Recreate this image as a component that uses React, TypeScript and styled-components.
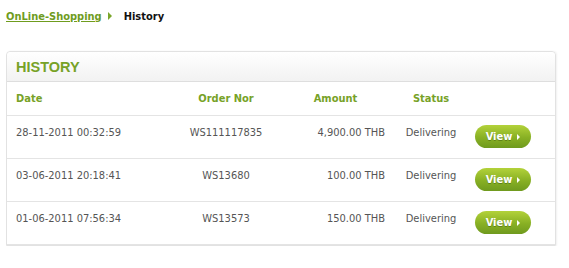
import React from "react";
import styled, { createGlobalStyle } from "styled-components";

const Global = createGlobalStyle`
  html, body { margin: 0; padding: 0; background: #fff; }
  body { font-family: Tahoma, "DejaVu Sans Condensed", "Liberation Sans", sans-serif; font-size: 11px; color: #555; }
`;

const Page = styled.div`
  padding: 8px 13px 0 6px;
  width: 550px;
`;

const Crumbs = styled.div`
  display: flex;
  align-items: center;
  height: 16px;
  font-weight: bold;
  font-size: 11px;
`;

const CrumbLink = styled.a`
  color: #6f9c1e;
  text-decoration: underline;
`;

const Arrow = styled.span`
  width: 0;
  height: 0;
  border-top: 4px solid transparent;
  border-bottom: 4px solid transparent;
  border-left: 4px solid #7aa62a;
  margin: 0 12px 0 6px;
`;

const Current = styled.span`
  color: #111;
`;

const Panel = styled.div`
  margin-top: 27px;
  border: 1px solid #e2e2e2;
  border-radius: 4px 4px 0 0;
  box-shadow: 1px 0 2px rgba(0, 0, 0, 0.06);
`;

const PanelHead = styled.div`
  height: 29px;
  display: flex;
  align-items: center;
  padding-left: 9px;
  background: linear-gradient(#ffffff, #f2f2f2);
  border-bottom: 1px solid #dedede;
  border-radius: 4px 4px 0 0;
  color: #77a227;
  font-weight: bold;
  font-size: 14.5px;
  font-family: "Liberation Sans", Arial, sans-serif;
`;

const Table = styled.table`
  width: 100%;
  border-collapse: collapse;
  table-layout: fixed;
`;

const Th = styled.th<{ $align?: string }>`
  height: 33px;
  text-align: ${(p) => p.$align || "left"};
  color: #77a227;
  font-weight: bold;
  font-size: 11px;
  padding: 0;
  border-bottom: 1px solid #e4e4e4;
`;

const Td = styled.td<{ $align?: string }>`
  height: 32px;
  text-align: ${(p) => p.$align || "left"};
  vertical-align: top;
  padding: 10px 0 0;
  border-bottom: 1px solid #e4e4e4;
  color: #555;
  white-space: nowrap;
`;

const ViewButton = styled.button`
  display: inline-flex;
  align-items: center;
  gap: 5px;
  height: 23px;
  width: 56px;
  justify-content: center;
  border: none;
  border-radius: 12px;
  background: linear-gradient(#b3d23a, #88b024 55%, #6f9a1e);
  color: #fff;
  font-weight: bold;
  font-size: 11px;
  font-family: inherit;
  text-shadow: 0 1px 0 rgba(60, 90, 10, 0.5);
  padding: 0;
  cursor: pointer;
  margin-top: -1px;
`;

const SmallArrow = styled.span`
  width: 0;
  height: 0;
  border-top: 3px solid transparent;
  border-bottom: 3px solid transparent;
  border-left: 3px solid #fff;
`;

const rows = [
  { date: "28-11-2011 00:32:59", order: "WS111117835", amount: "4,900.00 THB" },
  { date: "03-06-2011 20:18:41", order: "WS13680", amount: "100.00 THB" },
  { date: "01-06-2011 07:56:34", order: "WS13573", amount: "150.00 THB" },
];

export default function App() {
  return (
    <>
      <Global />
      <Page>
        <Crumbs>
          <CrumbLink>OnLine-Shopping</CrumbLink>
          <Arrow />
          <Current>History</Current>
        </Crumbs>
        <Panel>
          <PanelHead>HISTORY</PanelHead>
          <Table>
            <colgroup>
              <col style={{ width: 9 }} />
              <col style={{ width: 150 }} />
              <col style={{ width: 120 }} />
              <col style={{ width: 99 }} />
              <col style={{ width: 10 }} />
              <col style={{ width: 72 }} />
              <col style={{ width: 72 }} />
              <col />
            </colgroup>
            <thead>
              <tr>
                <Th />
                <Th>Date</Th>
                <Th $align="center">Order Nor</Th>
                <Th $align="center">Amount</Th>
                <Th />
                <Th $align="center">Status</Th>
                <Th />
                <Th />
              </tr>
            </thead>
            <tbody>
              {rows.map((r) => (
                <tr key={r.order}>
                  <Td />
                  <Td>{r.date}</Td>
                  <Td $align="center">{r.order}</Td>
                  <Td $align="right">{r.amount}</Td>
                  <Td />
                  <Td $align="center">Delivering</Td>
                  <Td $align="center">
                    <ViewButton>
                      View <SmallArrow />
                    </ViewButton>
                  </Td>
                  <Td />
                </tr>
              ))}
            </tbody>
          </Table>
        </Panel>
      </Page>
    </>
  );
}
